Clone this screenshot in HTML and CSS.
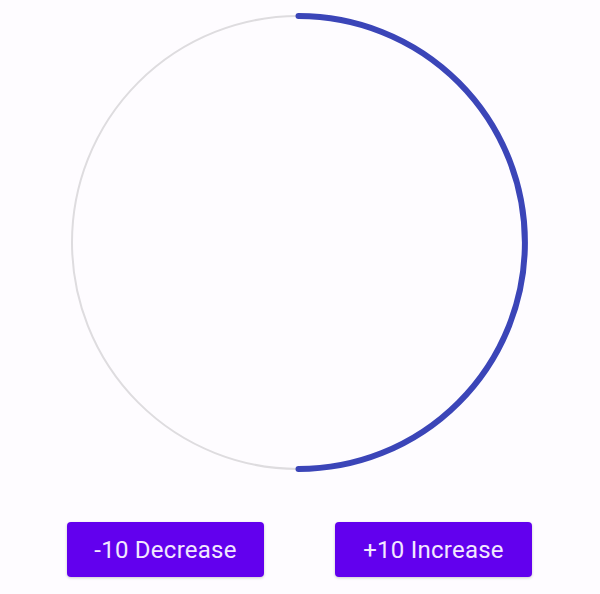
FILE: index.html
```html
<!DOCTYPE html>
<html>
<head>
<meta charset="utf-8">
<link rel="stylesheet" href="styles.css">
</head>
<body>
<div class="screen">
  <div class="gauge">
    <svg class="ring" width="600" height="522" viewBox="0 0 600 522">
      <circle class="track" cx="298.5" cy="242.5" r="226.5"></circle>
      <path class="progress" d="M 298.5 16 A 226.5 226.5 0 0 1 298.5 469"></path>
    </svg>
  </div>
  <div class="actions">
    <button class="btn">-10 Decrease</button>
    <button class="btn">+10 Increase</button>
  </div>
</div>
</body>
</html>
```
FILE: styles.css
```css
html, body {
  margin: 0;
  padding: 0;
  background: #fefcff;
}
.screen {
  width: 600px;
  height: 594px;
  display: flex;
  flex-direction: column;
  font-family: Roboto, "Noto Sans", sans-serif;
}
.gauge {
  height: 522px;
}
.ring {
  display: block;
}
.track {
  fill: none;
  stroke: #dedcdf;
  stroke-width: 2;
}
.progress {
  fill: none;
  stroke: #3b45b8;
  stroke-width: 6;
  stroke-linecap: round;
}
.actions {
  display: flex;
  gap: 71px;
  padding-left: 67px;
}
.btn {
  width: 197px;
  height: 55px;
  border: none;
  border-radius: 4px;
  background: #6200ee;
  color: #f2e8ff;
  font-family: Roboto, "Noto Sans", sans-serif;
  font-size: 24px;
  letter-spacing: 0.25px;
  padding: 0;
  box-shadow: 0 1px 3px rgba(0,0,0,0.2);
}
```
